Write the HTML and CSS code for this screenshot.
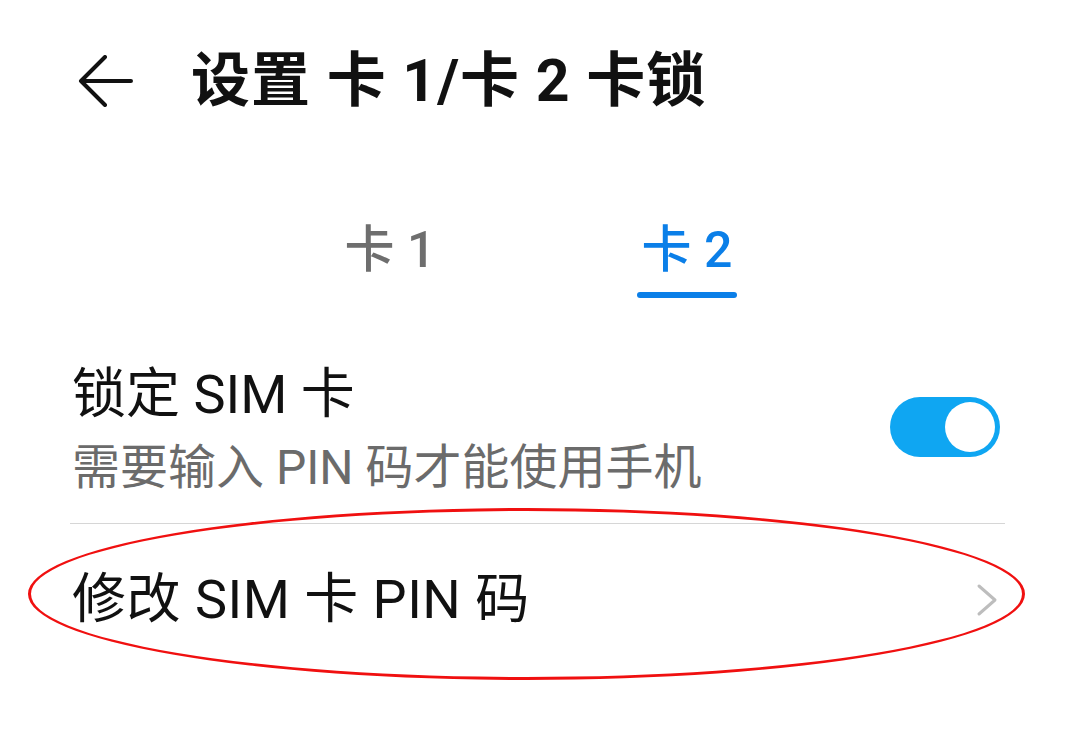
FILE: index.html
```html
<!DOCTYPE html>
<html>
	<head>
		<meta charset="UTF-8">
		<title>卡锁</title>
		<link rel="stylesheet" href="styles.css">
	</head>
	<body>
		<div id="box">
			<!--标题栏-->
			<div class="header">
				<svg class="back" width="56" height="52" viewBox="0 0 56 52">
					<path d="M54 26 H4 M28 2 L4 26 L28 50" fill="none" stroke="#111" stroke-width="4" stroke-linecap="round" stroke-linejoin="round"/>
				</svg>
				<div class="title">设置 卡 1/卡 2 卡锁</div>
			</div>
			<!--卡 1 / 卡 2-->
			<div class="tabs">
				<div class="tab">卡 1</div>
				<div class="tab active">卡 2<span class="line"></span></div>
			</div>
			<!--列表-->
			<div class="list">
				<div class="row first">
					<div class="text">
						<div class="name">锁定 SIM 卡</div>
						<div class="desc">需要输入 PIN 码才能使用手机</div>
					</div>
					<div class="switch"><span class="knob"></span></div>
				</div>
				<div class="row second">
					<div class="name">修改 SIM 卡 PIN 码</div>
					<svg class="arrow" width="24" height="34" viewBox="0 0 24 34">
						<path d="M4 3 L20 17 L4 31" fill="none" stroke="#bdbdbd" stroke-width="3" stroke-linecap="round" stroke-linejoin="round"/>
					</svg>
				</div>
			</div>
			<!--红圈标注-->
			<div class="mark"></div>
		</div>
	</body>
</html>
```

FILE: styles.css
```css
* {
	margin: 0;
	padding: 0;
}
body {
	background: #fff;
	font-family: Roboto, "Noto Sans CJK SC", sans-serif;
	color: #111;
}
#box {
	width: 1077px;
	height: 754px;
	position: relative;
	overflow: hidden;
}
.header {
	display: flex;
	align-items: center;
	padding: 46px 0 0 77px;
	height: 70px;
}
.back {
	display: block;
}
.title {
	margin-left: 58px;
	font-size: 59px;
	line-height: 70px;
	font-weight: bold;
	letter-spacing: 1px;
	white-space: nowrap;
}
.tabs {
	display: flex;
	justify-content: center;
	margin-top: 104px;
}
.tab {
	width: 297px;
	display: flex;
	flex-direction: column;
	align-items: center;
	font-size: 50px;
	line-height: 60px;
	font-weight: 500;
	color: #6e6e6e;
}
.tab.active {
	color: #0b7fe8;
}
.line {
	display: block;
	width: 100px;
	height: 6px;
	margin-top: 12px;
	border-radius: 3px;
	background: #0b7fe8;
}
.tab:first-child {
	padding-bottom: 18px;
}
.list {
	margin: 65px 72px 0 70px;
}
.row {
	display: flex;
	align-items: center;
	justify-content: space-between;
}
.first {
	padding: 0 5px 25px 2px;
	border-bottom: 1px solid #d6d6d6;
}
.name {
	font-size: 54px;
	line-height: 64px;
	white-space: nowrap;
}
.second .name {
	letter-spacing: 0.5px;
}
.desc {
	margin-top: 11px;
	font-size: 48px;
	line-height: 60px;
	color: #6b6b6b;
	white-space: nowrap;
}
.switch {
	width: 110px;
	height: 60px;
	box-sizing: border-box;
	padding: 5px;
	border-radius: 30px;
	background: #0fa6f2;
	display: flex;
	justify-content: flex-end;
	margin-top: -8px;
}
.knob {
	width: 50px;
	height: 50px;
	border-radius: 50%;
	background: #fff;
}
.second {
	padding: 44px 6px 0 2px;
}
.arrow {
	display: block;
}
.mark {
	position: absolute;
	left: 28px;
	top: 508px;
	width: 997px;
	height: 172px;
	box-sizing: border-box;
	border: 3px solid #f01010;
	border-radius: 50%;
}
```
